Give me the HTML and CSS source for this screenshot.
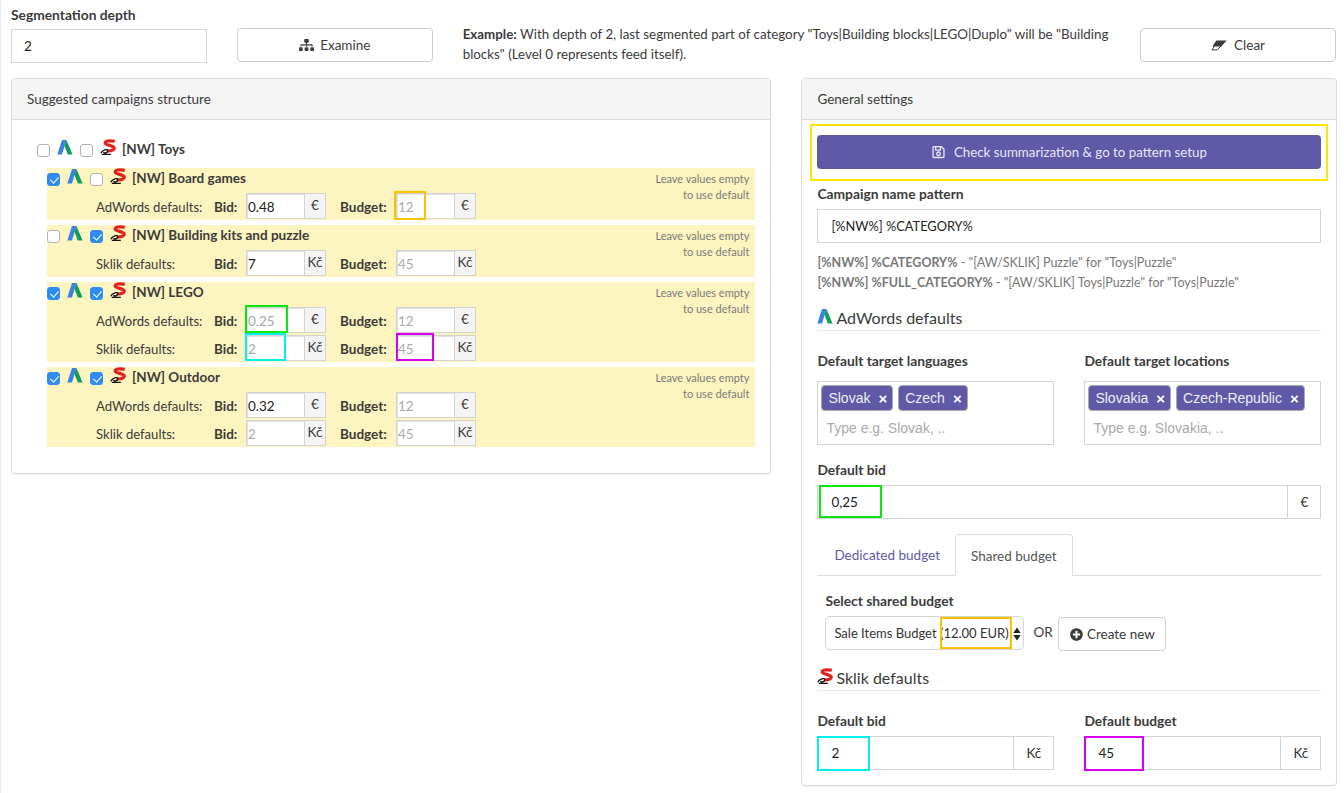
FILE: index.html
```html
<!DOCTYPE html>
<html lang="en">
<head>
<meta charset="utf-8">
<title>Campaign segmentation</title>
<link rel="stylesheet" href="styles.css">
</head>
<body>
<svg class="defs" width="0" height="0" aria-hidden="true">
  <symbol id="i-ads" viewBox="0 0 16 16">
    <path d="M.3 15.500 5 1h4.400L5 15.500z" fill="#3b82e6"/>
    <path d="M9.400 1 15.600 15.500h-4.700L7.400 6.800z" fill="#0f9d58"/>
  </symbol>
  <symbol id="i-sklik" viewBox="0 0 16 16">
    <path d="M14.800 2.300C9.500 1.200 4.300 2 5.300 4.300c1 2.200 9.500 2.200 9 5-.4 2-4.200 2.800-7.500 2.700" fill="none" stroke="#e2201c" stroke-width="3.200"/>
    <path d="M.8 14.300c1.500-3.800 6.800-4.600 7-2.600.1 2-4 3.200-4.200 1.400M1.800 15.300h9" fill="none" stroke="#111" stroke-width="1.300"/>
  </symbol>
</svg>

<header class="top">
  <div class="span2">
    <label class="lbl top-lbl">Segmentation depth</label>
    <input class="field" value="2">
  </div>
  <div class="span2 top-btn">
    <button class="btn"><svg class="ic-sitemap" viewBox="0 0 640 512"><path fill="currentColor" d="M128 352H32c-17.67 0-32 14.33-32 32v96c0 17.67 14.33 32 32 32h96c17.67 0 32-14.33 32-32v-96c0-17.67-14.33-32-32-32zm-24-80h192v48h48v-48h192v48h48v-57.59c0-21.17-17.23-38.41-38.41-38.41H344v-64h40c17.67 0 32-14.33 32-32V32c0-17.67-14.33-32-32-32H256c-17.67 0-32 14.33-32 32v96c0 17.67 14.33 32 32 32h40v64H94.41C73.23 224 56 241.23 56 262.41V320h48v-48zm264 80h-96c-17.67 0-32 14.33-32 32v96c0 17.67 14.33 32 32 32h96c17.67 0 32-14.33 32-32v-96c0-17.67-14.33-32-32-32zm240 0h-96c-17.67 0-32 14.33-32 32v96c0 17.67 14.33 32 32 32h96c17.67 0 32-14.33 32-32v-96c0-17.67-14.33-32-32-32z"/></svg>Examine</button>
  </div>
  <p class="span6 example"><b>Example:</b> With depth of 2, last segmented part of category "Toys|Building blocks|LEGO|Duplo" will be "Building blocks" (Level 0 represents feed itself).</p>
  <div class="span2 top-btn">
    <button class="btn"><svg class="ic-eraser" viewBox="0 0 16 11"><path fill="currentColor" d="M5.300.4h10.400L10.300 6.400H1.300z"/><path fill="none" stroke="currentColor" d="M3.600 6 .9 9.900h5.500L9.800 6"/></svg>Clear</button>
  </div>
</header>

<main class="columns">
  <section class="card left">
    <h2 class="card-head">Suggested campaigns structure</h2>
    <div class="tree">
      <div class="head root">
        <input type="checkbox"><svg class="logo"><use href="#i-ads"/></svg>
        <input type="checkbox"><svg class="logo"><use href="#i-sklik"/></svg>
        <b>[NW] Toys</b>
      </div>

      <article class="row">
        <div>
          <div class="head">
            <input type="checkbox" checked><svg class="logo"><use href="#i-ads"/></svg>
            <input type="checkbox"><svg class="logo"><use href="#i-sklik"/></svg>
            <b>[NW] Board games</b>
          </div>
          <div class="line">
            <span class="line-name">AdWords defaults:</span><b class="bid">Bid:</b>
            <span class="mini"><input value="0.48"><i>€</i></span>
            <b class="bud">Budget:</b>
            <span class="mini"><input placeholder="12"><i>€</i><span class="hl hl-amber-s"></span></span>
          </div>
        </div>
        <p class="note">Leave values empty<br>to use default</p>
      </article>

      <article class="row">
        <div>
          <div class="head">
            <input type="checkbox"><svg class="logo"><use href="#i-ads"/></svg>
            <input type="checkbox" checked><svg class="logo"><use href="#i-sklik"/></svg>
            <b>[NW] Building kits and puzzle</b>
          </div>
          <div class="line">
            <span class="line-name">Sklik defaults:</span><b class="bid">Bid:</b>
            <span class="mini"><input value="7"><i>Kč</i></span>
            <b class="bud">Budget:</b>
            <span class="mini"><input placeholder="45"><i>Kč</i></span>
          </div>
        </div>
        <p class="note">Leave values empty<br>to use default</p>
      </article>

      <article class="row">
        <div>
          <div class="head">
            <input type="checkbox" checked><svg class="logo"><use href="#i-ads"/></svg>
            <input type="checkbox" checked><svg class="logo"><use href="#i-sklik"/></svg>
            <b>[NW] LEGO</b>
          </div>
          <div class="line">
            <span class="line-name">AdWords defaults:</span><b class="bid">Bid:</b>
            <span class="mini"><input placeholder="0.25"><i>€</i><span class="hl hl-green-s"></span></span>
            <b class="bud">Budget:</b>
            <span class="mini"><input placeholder="12"><i>€</i></span>
          </div>
          <div class="line">
            <span class="line-name">Sklik defaults:</span><b class="bid">Bid:</b>
            <span class="mini"><input placeholder="2"><i>Kč</i><span class="hl hl-cyan-s"></span></span>
            <b class="bud">Budget:</b>
            <span class="mini"><input placeholder="45"><i>Kč</i><span class="hl hl-magenta-s"></span></span>
          </div>
        </div>
        <p class="note">Leave values empty<br>to use default</p>
      </article>

      <article class="row">
        <div>
          <div class="head">
            <input type="checkbox" checked><svg class="logo"><use href="#i-ads"/></svg>
            <input type="checkbox" checked><svg class="logo"><use href="#i-sklik"/></svg>
            <b>[NW] Outdoor</b>
          </div>
          <div class="line">
            <span class="line-name">AdWords defaults:</span><b class="bid">Bid:</b>
            <span class="mini"><input value="0.32"><i>€</i></span>
            <b class="bud">Budget:</b>
            <span class="mini"><input placeholder="12"><i>€</i></span>
          </div>
          <div class="line">
            <span class="line-name">Sklik defaults:</span><b class="bid">Bid:</b>
            <span class="mini"><input placeholder="2"><i>Kč</i></span>
            <b class="bud">Budget:</b>
            <span class="mini"><input placeholder="45"><i>Kč</i></span>
          </div>
        </div>
        <p class="note">Leave values empty<br>to use default</p>
      </article>
    </div>
  </section>

  <section class="card right">
    <h2 class="card-head">General settings</h2>
    <div class="settings">
      <div class="cta-wrap">
        <button class="cta"><svg class="ic-save" viewBox="0 0 448 512"><path fill="currentColor" d="M433.941 129.941l-83.882-83.882A48 48 0 0 0 316.118 32H48C21.49 32 0 53.49 0 80v352c0 26.51 21.49 48 48 48h352c26.51 0 48-21.49 48-48V163.882a48 48 0 0 0-14.059-33.941zM272 80v80H144V80h128zm122 352H54a6 6 0 0 1-6-6V86a6 6 0 0 1 6-6h42v104c0 13.255 10.745 24 24 24h176c13.255 0 24-10.745 24-24V83.882l78.243 78.243a6 6 0 0 1 1.757 4.243V426a6 6 0 0 1-6 6zM224 232c-48.523 0-88 39.477-88 88s39.477 88 88 88 88-39.477 88-88-39.477-88-88-88zm0 128c-22.056 0-40-17.944-40-40s17.944-40 40-40 40 17.944 40 40-17.944 40-40 40z"/></svg>Check summarization &amp; go to pattern setup</button>
        <span class="hl hl-yellow"></span>
      </div>

      <label class="lbl pattern-lbl">Campaign name pattern</label>
      <input class="field pattern-field" value="[%NW%] %CATEGORY%">
      <p class="help"><b>[%NW%] %CATEGORY%</b> - "[AW/SKLIK] Puzzle" for "Toys|Puzzle"<br><b>[%NW%] %FULL_CATEGORY%</b> - "[AW/SKLIK] Toys|Puzzle" for "Toys|Puzzle"</p>

      <h3 class="section-title ads-title"><svg class="logo-lg"><use href="#i-ads"/></svg>AdWords defaults</h3>

      <div class="two">
        <div>
          <label class="lbl">Default target languages</label>
          <div class="tags">
            <div class="tag-list"><span class="tag">Slovak<em>×</em></span><span class="tag">Czech<em>×</em></span></div>
            <input class="tag-input" placeholder="Type e.g. Slovak, ..">
          </div>
        </div>
        <div>
          <label class="lbl">Default target locations</label>
          <div class="tags">
            <div class="tag-list"><span class="tag">Slovakia<em>×</em></span><span class="tag">Czech-Republic<em>×</em></span></div>
            <input class="tag-input" placeholder="Type e.g. Slovakia, ..">
          </div>
        </div>
      </div>

      <label class="lbl bid-lbl">Default bid</label>
      <div class="group">
        <input value="0,25"><span class="addon addon-eur">€</span><span class="hl hl-green"></span>
      </div>

      <nav class="tabs">
        <a class="tab">Dedicated budget</a>
        <a class="tab active">Shared budget</a>
      </nav>

      <div class="shared">
        <label class="lbl">Select shared budget</label>
        <div class="shared-row">
          <div class="select">
            <span>Sale Items Budget (12.00 EUR)</span>
            <svg class="updown" viewBox="0 0 8 14"><path fill="#222" d="M4 .5 7.700 6H.3zM4 13.500.3 8h7.400z"/></svg>
            <span class="hl hl-amber"></span>
          </div>
          <span class="or">OR</span>
          <button class="btn btn-new"><svg class="ic-plus" viewBox="0 0 512 512"><path fill="currentColor" d="M256 8C119 8 8 119 8 256s111 248 248 248 248-111 248-248S393 8 256 8zm144 276c0 6.600-5.400 12-12 12h-92v92c0 6.600-5.400 12-12 12h-56c-6.600 0-12-5.400-12-12v-92h-92c-6.600 0-12-5.400-12-12v-56c0-6.600 5.400-12 12-12h92v-92c0-6.600 5.400-12 12-12h56c6.600 0 12 5.400 12 12v92h92c6.600 0 12 5.400 12 12v56z"/></svg>Create new</button>
        </div>
      </div>

      <h3 class="section-title sklik-title"><svg class="logo-lg"><use href="#i-sklik"/></svg>Sklik defaults</h3>

      <div class="two">
        <div>
          <label class="lbl">Default bid</label>
          <div class="group"><input value="2"><span class="addon addon-kc">Kč</span><span class="hl hl-cyan"></span></div>
        </div>
        <div>
          <label class="lbl">Default budget</label>
          <div class="group"><input value="45"><span class="addon addon-kc">Kč</span><span class="hl hl-magenta"></span></div>
        </div>
      </div>
    </div>
  </section>
</main>
</body>
</html>
```

FILE: styles.css
```css
* { box-sizing: border-box; }
html, body { margin: 0; height: 793px; overflow: hidden; }
body {
  padding: 0 8px 0 10px;
  border-left: 1px solid #e8ebf2;
  background: #fff;
  color: #3b3b3b;
  font: 13.5px/20px Lato, "Noto Sans", sans-serif;
}
.defs { position: absolute; }
p, h2, h3 { margin: 0; font-weight: 400; }
b { font-weight: 700; }
input { font: inherit; color: #222; outline: 0; }

/* top bar */
.top { display: grid; grid-template-columns: repeat(12, 1fr); column-gap: 30px; height: 78px; }
.span2 { grid-column: span 2; }
.span6 { grid-column: span 6; }
.lbl { display: block; font-size: 13.8px; font-weight: 700; line-height: 20px; color: #3b3b3b; }
.top-lbl { padding-top: 5px; margin-bottom: 4px; }
.field { display: block; width: 100%; height: 34px; padding: 0 12px; border: 1px solid #ced4da; background: #fff; }
.pattern-field { font-size: 12.8px; padding: 0 13px; }
.top-btn { padding-top: 28px; }
.btn {
  display: flex; align-items: center; justify-content: center; width: 100%; height: 34px;
  border: 1px solid #ccc; border-radius: 4px; background: #fff; color: #3b3b3b; font: inherit;
}
.ic-sitemap { width: 15px; height: 12px; margin-right: 6px; }
.ic-eraser { width: 16px; height: 11px; margin-right: 7px; }
.example { padding-top: 24px; font-size: 13.35px; }

/* columns */
.columns { display: grid; grid-template-columns: 760.4px 1fr; column-gap: 30px; align-items: start; }
.card { border: 1px solid #dcdcdc; border-radius: 4px; box-shadow: 0 1px 1px rgba(0,0,0,.05); background: #fff; }
.card-head { height: 41px; padding: 10px 15px; font-size: inherit; line-height: 20px; background: #f5f5f5; border-bottom: 1px solid #dcdcdc; border-radius: 3px 3px 0 0; }

/* tree */
.tree { display: flex; flex-direction: column; gap: 5px; padding: 19px 15px 26px 35px; }
.head { display: flex; align-items: center; height: 25px; padding-bottom: 6px; white-space: nowrap; }
.head b { margin-left: -1px; font-size: 13.5px; }
.head input {
  position: relative; flex: none; width: 13px; height: 13px; margin: 3px 7px 0 0;
  appearance: none; border: 1px solid #b2b2b2; border-radius: 3px; background: #fff;
}
.head input:checked { border-color: #2f8cf5; background: #2f8cf5; }
.head input:checked::after {
  content: ""; position: absolute; left: 3.5px; top: 1px; width: 4px; height: 7px;
  border: solid #fff; border-width: 0 1.6px 1.6px 0; transform: rotate(42deg);
}
.root { height: 24px; padding-bottom: 5px; margin-left: -10px; }
.logo { width: 16px; height: 16px; margin: -3px 7px 0 0; flex: none; }
.row { display: grid; grid-template-columns: 1fr auto; padding-bottom: 1px; background: #fdf5c0; }
.row .line + .line { margin-top: 2px; }
.line { display: flex; align-items: center; height: 26px; padding-left: 49px; white-space: nowrap; }
.line-name { width: 118px; padding-top: 2px; font-size: 13.1px; }
.bid { width: 32px; padding-top: 2px; }
.bud { width: 56px; margin-left: 14px; padding-top: 2px; }
.mini { position: relative; display: flex; width: 80px; height: 26px; }
.mini input { width: 58px; height: 26px; padding: 2px 2px 0 1px; border: 1px solid #d3d3d3; border-right: 0; box-shadow: inset 1px 1px 0 #e2e2e2; background: #fff; }
.mini input::placeholder { color: #aaa; opacity: 1; }
.mini i { width: 22px; font-style: normal; text-align: center; line-height: 22px; background: #f4f4f4; border: 1px solid #d3d3d3; }
.note { padding: 3px 6px 0 0; font-size: 11px; line-height: 16px; text-align: right; color: #7b7b7b; }

/* settings */
.settings { padding: 15px 15px 15px; }
.cta-wrap { position: relative; }
.cta {
  display: flex; align-items: center; justify-content: center; width: 100%; height: 34px;
  border: 0; border-radius: 4px; background: #5f59a8; color: #e8e7f4; font: inherit; font-size: 13.3px;
}
.ic-save { width: 13px; height: 14px; margin-right: 9px; }
.pattern-lbl { margin: 15px 0 5px; }
.help { margin-top: 10px; font-size: 12.5px; color: #777; }
.help b { font-weight: 700; }
.section-title { display: flex; align-items: center; height: 25px; border-bottom: 1px solid #e6e6e6; font-size: 16px; }
.ads-title { margin: 13px 0 20px; }
.sklik-title { margin: 15px 0 20px; }
.logo-lg { width: 16px; height: 16px; margin: -4px 3px 0 0; }
.two { display: grid; grid-template-columns: 1fr 1fr; column-gap: 30px; }
.two .lbl { margin-bottom: 5px; }
.tags { height: 64px; margin-top: 10px; padding: 3px 3px 0; border: 1px solid #ced4da; }
.tag-list { display: flex; gap: 5px; }
.tag { display: inline-flex; align-items: center; height: 26px; padding: 0 5px 0 6px; border: 1px solid #aaa; border-radius: 4px; background: #5f59a8; color: #eee; font: 14px "Liberation Sans", Arial, sans-serif; }
.tag em { margin-left: 8px; font: 700 15px "Liberation Sans", Arial, sans-serif; color: #fff; }
.tag-input { display: block; width: 100%; height: 32px; margin-top: 1px; padding: 0 5px; border: 0; font: 14px "Liberation Sans", Arial, sans-serif; }
.tag-input::placeholder { color: #aaa; opacity: 1; }
.bid-lbl { margin: 15px 0 5px; }
.group { position: relative; display: flex; height: 34px; border: 1px solid #ced4da; }
.group input { flex: 1; min-width: 0; padding: 0 13px; border: 0; background: transparent; }
.addon { text-align: center; line-height: 32px; border-left: 1px solid #ced4da; color: #333; }
.addon-eur { width: 33px; }
.addon-kc { width: 40px; }

/* tabs */
.tabs { display: flex; height: 41px; margin-top: 16px; border-bottom: 1px solid #ddd; }
.tab { display: block; height: 41px; padding: 10px 15px 10px 17px; color: #5f59a8; }
.active { height: 42px; margin-top: -1px; padding: 11px 15px 10px; border: 1px solid #ddd; border-bottom-color: #fff; border-radius: 4px 4px 0 0; background: #fff; color: #555; }
.shared { padding: 15px 8px 0; }
.shared .lbl { margin-bottom: 5px; }
.shared-row { display: flex; align-items: flex-start; }
.select { position: relative; display: flex; align-items: center; width: 199px; height: 34px; padding: 0 6px 0 8px; border: 1px solid #d5d5d5; border-radius: 5px; white-space: nowrap; font-size: 13px; color: #333; }
.updown { position: absolute; right: 2px; top: 10px; width: 8px; height: 14px; }
.or { margin: 6px 8px 0 9px; width: 17px; white-space: nowrap; }
.btn-new { width: 108px; margin-top: 1px; }
.ic-plus { width: 13px; height: 13px; margin-right: 4px; }

/* annotation frames drawn over the controls */
.hl { position: absolute; pointer-events: none; border: 2px solid; }
.hl-yellow { left: -7px; right: -7px; top: -11px; bottom: -12px; border-color: #ffe600; }
.hl-amber-s { left: -2px; top: -2px; width: 32px; height: 29px; border-color: #fcc200; }
.hl-green-s { left: -1px; top: -2px; width: 43px; height: 28px; border-color: #0ee60e; }
.hl-cyan-s { left: -1px; top: -2px; width: 41px; height: 28px; border-color: #00f0f0; }
.hl-magenta-s { left: 0; top: -2px; width: 38px; height: 28px; border-color: #d800f0; }
.hl-green { left: 1px; top: -1px; width: 63px; height: 33px; border-color: #0ee60e; }
.hl-amber { left: 114px; top: 0; width: 72px; height: 32px; border-color: #fcc200; }
.hl-cyan { left: -1px; top: -1px; width: 53px; height: 35px; border-color: #00f0f0; }
.hl-magenta { left: -1px; top: -1px; width: 60px; height: 35px; border-color: #d800f0; }
```
